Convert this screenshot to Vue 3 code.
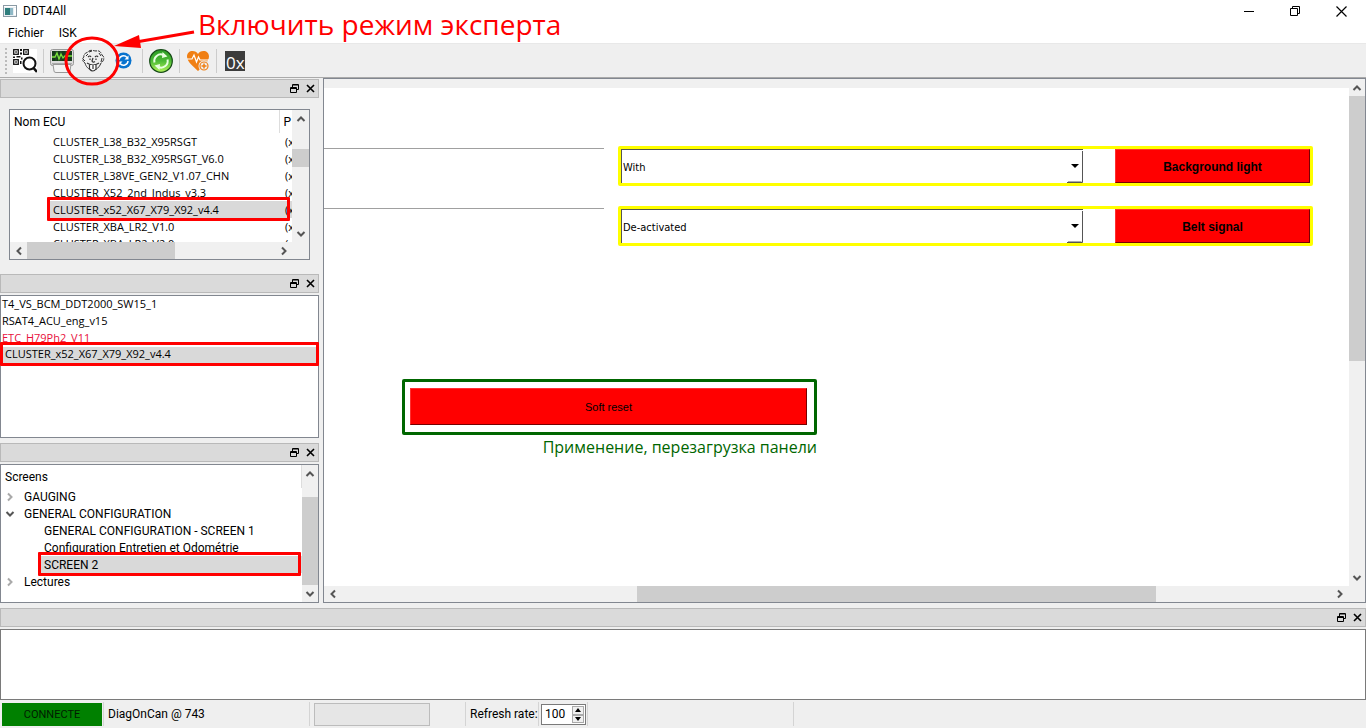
<script setup>
import { ref } from 'vue'

const ecus = [
  'CLUSTER_L38_B32_X95RSGT',
  'CLUSTER_L38_B32_X95RSGT_V6.0',
  'CLUSTER_L38VE_GEN2_V1.07_CHN',
  'CLUSTER_X52_2nd_Indus_v3.3',
  'CLUSTER_x52_X67_X79_X92_v4.4',
  'CLUSTER_XBA_LR2_V1.0',
  'CLUSTER_XBA_LR2_V2.0'
]
const selectedEcu = 'CLUSTER_x52_X67_X79_X92_v4.4'

const loaded = [
  { name: 'T4_VS_BCM_DDT2000_SW15_1' },
  { name: 'RSAT4_ACU_eng_v15' },
  { name: 'ETC_H79Ph2_V11', alert: true },
  { name: selectedEcu, selected: true }
]

const screens = [
  { name: 'GAUGING', icon: 'right' },
  { name: 'GENERAL CONFIGURATION', icon: 'down' },
  { name: 'GENERAL CONFIGURATION - SCREEN 1', child: true },
  { name: 'Configuration Entretien et Odométrie', child: true },
  { name: 'SCREEN 2', child: true, selected: true },
  { name: 'Lectures', icon: 'right' }
]

const settings = [
  { id: 'light', value: 'With', options: ['With', 'Without'], action: 'Background light' },
  { id: 'belt', value: 'De-activated', options: ['De-activated', 'Activated'], action: 'Belt signal' }
]

const rate = ref(100)
</script>

<template>
  <div class="window">
    <svg class="defs" aria-hidden="true">
      <symbol id="up" viewBox="0 0 10 10"><path d="M1.5 7 5 3.500 8.500 7" fill="none" stroke="#555" stroke-width="2" /></symbol>
      <symbol id="down" viewBox="0 0 10 10"><path d="M1.500 3 5 6.500 8.500 3" fill="none" stroke="#555" stroke-width="2" /></symbol>
      <symbol id="left" viewBox="0 0 10 10"><path d="M7 1.500 3.500 5 7 8.500" fill="none" stroke="#555" stroke-width="2" /></symbol>
      <symbol id="right" viewBox="0 0 10 10"><path d="M3 1.500 6.500 5 3 8.500" fill="none" stroke="#555" stroke-width="2" /></symbol>
      <symbol id="float" viewBox="0 0 9 9"><path d="M2.500 3.500V.500H8.500V5.500H6.500M3 1H8M.500 3.500H6.500V8.500H.500ZM1 4.500H6" fill="none" stroke="#000" /></symbol>
      <symbol id="shut" viewBox="0 0 9 9"><path d="M1 1 8 8M8 1 1 8" fill="none" stroke="#000" stroke-width="1.600" /></symbol>
    </svg>

    <header class="titlebar">
      <svg class="appicon" width="14" height="12" viewBox="0 0 14 12">
        <rect x=".5" y=".5" width="13" height="11" fill="#e8eef2" stroke="#8b9aa5" />
        <path d="M1 1.500H13" stroke="#fff" />
        <rect x="2" y="3" width="5" height="7" fill="#2d7d7c" /><rect x="7" y="3" width="3" height="7" fill="#8db7c5" />
        <rect x="11" y="3" width="2" height="7" fill="#fff" />
      </svg>
      <span class="apptitle">DDT4All</span>
      <button class="winbtn" aria-label="Minimize"><svg width="11" height="11"><path d="M0 5.500H10" stroke="#000" /></svg></button>
      <button class="winbtn" aria-label="Restore"><svg width="11" height="11"><path d="M2.500 2.500V.500H9.500V7.500H7.500M.500 2.500H7.500V9.500H.500Z" fill="none" stroke="#000" /></svg></button>
      <button class="winbtn" aria-label="Close"><svg width="11" height="11"><path d="M.5 .5 10.500 10.500M10.500 .5 .5 10.500" stroke="#000" stroke-width="1.200" /></svg></button>
    </header>

    <nav class="menubar">
      <button>Fichier</button>
      <button>ISK</button>
    </nav>

    <div class="toolbar">
      <span class="grip"></span>
      <button class="tool scan" aria-label="Scan">
        <svg width="24" height="24" viewBox="0 0 24 24">
          <rect width="24" height="24" fill="#fff" />
          <g fill="none" stroke="#111" stroke-width="1.300">
            <rect x=".7" y=".7" width="4.600" height="4.600" /><rect x="10.700" y=".7" width="4.600" height="4.600" /><rect x=".7" y="10.700" width="4.600" height="4.600" />
          </g>
          <path d="M2.300 2.300h1.500v1.500H2.300ZM12.300 2.300h1.500v1.500H12.300ZM2.300 12.300h1.500v1.500H2.300ZM7 0h2v2H7ZM7 3.500h2v2H7ZM0 7.500h2v1.500H0ZM3.500 7h4v1.500h-4ZM8 8.500h1.500v2H8ZM7 12h1.500v3H7Z" fill="#111" />
          <circle cx="16.500" cy="14.500" r="6" fill="#fff" stroke="#111" stroke-width="2" />
          <path d="M20.500 19 24 23" stroke="#111" stroke-width="2.600" />
        </svg>
      </button>
      <span class="sep"></span>
      <button class="tool" aria-label="Diagnostic">
        <svg width="24" height="24" viewBox="0 0 24 24">
          <rect x=".5" y=".5" width="23" height="16" rx="2" fill="#dcdcdc" stroke="#999" />
          <rect x="2" y="2" width="20" height="10" fill="#173a1c" />
          <path d="M2 7H22M6 2V12M11 2V12M16 2V12" stroke="#315f36" stroke-width=".6" />
          <path d="M2 8H5L7 4 9 10 11 5 13 9 15 7H22" fill="none" stroke="#79e23c" stroke-width="1.300" />
          <path d="M3 15.500 4 22Q4 23.500 6 23.500H18Q20 23.500 20 22L21 15.500Z" fill="#f3f3f3" stroke="#999" />
          <path d="M2 14.500H22" stroke="#aaa" />
        </svg>
      </button>
      <button class="tool expert" aria-label="Expert mode">
        <svg width="24" height="24" viewBox="0 0 24 24" fill="none" stroke="#333">
          <path d="M4 14C1 12 1 9 3 8 2 5 5 4 7 3 9 0 13 2 15 2 19 1 20 4 21 6 24 8 23 12 20 14" stroke-dasharray="4 1" />
          <path d="M5 7 7 5M8 3 11 2M18 4 20 7M21 9 20 13M2 10 4 12M4 14C5 18 7 19 8 20M20 14C19 17 17 19 15 20.500" />
          <path d="M7 8Q9 6 10 8M14 8Q16 6 17 8M9 9.500V11M15 9.500V11M12 9 11 12Q12 14 14 12.500M6 14Q12 18 18 14" stroke-width="1.200" />
          <path d="M8.500 16V20Q12 24 15 20V16M12 16V20" fill="#fff" stroke-width="1.200" />
        </svg>
      </button>
      <button class="tool sync" aria-label="Reconnect">
        <svg width="17" height="17" viewBox="0 0 17 17">
          <circle cx="8.500" cy="8.500" r="8" fill="#0873ce" />
          <path d="M4 8A4.500 4.500 0 0 1 12 5.500M13 9A4.500 4.500 0 0 1 5 11.500" fill="none" stroke="#fff" stroke-width="1.500" />
          <path d="M13.500 3.500V7.500H9.500ZM3.500 13.500V9.500H7.500Z" fill="#fff" />
        </svg>
      </button>
      <span class="sep"></span>
      <button class="tool" aria-label="Refresh">
        <svg width="24" height="24" viewBox="0 0 24 24">
          <defs><linearGradient id="leaf" x2="0" y2="1"><stop stop-color="#2b9c25" /><stop offset=".5" stop-color="#4cba35" /><stop offset="1" stop-color="#b5f55c" /></linearGradient></defs>
          <circle cx="12" cy="12" r="11.300" fill="url(#leaf)" stroke="#174c18" stroke-width="1.200" />
          <path d="M5.500 13.500A6.500 6.500 0 0 1 14.500 6M18.500 10.500A6.500 6.500 0 0 1 9.500 18" fill="none" stroke="#e9ffe0" stroke-width="2" />
          <path d="M13.500 3 18.500 7.500 13 9ZM10.500 21 5.500 16.500 11 15Z" fill="#e9ffe0" />
        </svg>
      </button>
      <span class="sep"></span>
      <button class="tool" aria-label="Health">
        <svg width="24" height="22" viewBox="0 0 24 22">
          <path d="M12 21C8 17 1 12 1 6.500 1 3 3.500 1 6.500 1 9 1 11 2 12 4 13 2 15 1 17.500 1 20.500 1 23 3 23 6.500 23 12 16 17 12 21Z" fill="#f07f13" />
          <path d="M1 9H6L8 5 10.500 12 12.500 7 14 10H23" fill="none" stroke="#fff" stroke-width="1.200" />
          <circle cx="18" cy="16" r="5.500" fill="#efefef" />
          <circle cx="18" cy="16" r="4" fill="none" stroke="#f07f13" stroke-width="1.200" />
          <path d="M15.500 16H20.500M18 13.500V18.500" stroke="#f07f13" stroke-width="1.500" />
        </svg>
      </button>
      <span class="sep"></span>
      <button class="tool hex">0x</button>
    </div>

    <main class="workspace">
      <aside class="side">
        <section class="dock">
          <div class="dockbar">
            <button aria-label="Float"><svg width="9" height="9"><use href="#float" /></svg></button>
            <button aria-label="Close"><svg width="9" height="9"><use href="#shut" /></svg></button>
          </div>
          <div class="inset">
            <div class="frame ecuframe">
              <div class="row grow">
                <div class="ecuview">
                  <table>
                    <thead><tr><th>Nom ECU</th><th class="proto">P</th></tr></thead>
                    <tbody>
                      <tr v-for="e in ecus" :key="e">
                        <td :class="{ picked: e === selectedEcu }"><span>{{ e }}</span></td>
                        <td class="code" :class="{ shade: e === selectedEcu }">(x</td>
                      </tr>
                    </tbody>
                  </table>
                </div>
                <div class="vbar wide">
                  <button aria-label="Up"><svg width="10" height="10"><use href="#up" /></svg></button>
                  <div class="track ecutrack"><span class="thumb"></span></div>
                  <button aria-label="Down"><svg width="10" height="10"><use href="#down" /></svg></button>
                </div>
              </div>
              <div class="hbar ecuh">
                <button aria-label="Left"><svg width="10" height="10"><use href="#left" /></svg></button>
                <div class="track"><span class="thumb"></span></div>
                <button aria-label="Right"><svg width="10" height="10"><use href="#right" /></svg></button>
              </div>
            </div>
          </div>
        </section>

        <section class="dock">
          <div class="dockbar">
            <button aria-label="Float"><svg width="9" height="9"><use href="#float" /></svg></button>
            <button aria-label="Close"><svg width="9" height="9"><use href="#shut" /></svg></button>
          </div>
          <ul class="frame loaded">
            <li v-for="l in loaded" :key="l.name" :class="{ alert: l.alert, picked: l.selected }"><span>{{ l.name }}</span></li>
          </ul>
        </section>

        <section class="dock grow">
          <div class="dockbar">
            <button aria-label="Float"><svg width="9" height="9"><use href="#float" /></svg></button>
            <button aria-label="Close"><svg width="9" height="9"><use href="#shut" /></svg></button>
          </div>
          <div class="frame row grow">
            <div class="tree">
              <div class="treehead">Screens</div>
              <ul>
                <li v-for="s in screens" :key="s.name" :class="{ child: s.child }">
                  <svg v-if="s.icon" class="twist" :class="s.icon" width="10" height="10"><use :href="'#' + s.icon" /></svg>
                  <span class="label" :class="{ picked: s.selected }"><span>{{ s.name }}</span></span>
                </li>
              </ul>
            </div>
            <div class="vbar">
              <button aria-label="Up"><svg width="10" height="10"><use href="#up" /></svg></button>
              <div class="track treetrack"><span class="thumb"></span></div>
              <button aria-label="Down"><svg width="10" height="10"><use href="#down" /></svg></button>
            </div>
          </div>
        </section>
      </aside>

      <section class="frame view">
        <div class="row grow">
          <div class="canvas">
            <div v-for="s in settings" :key="s.id" class="setting">
              <span class="rule"></span>
              <div class="group">
                <div class="combo">
                  <select :aria-label="s.action" :value="s.value">
                    <option v-for="o in s.options" :key="o">{{ o }}</option>
                  </select>
                  <svg class="caret" width="16" height="34" viewBox="0 0 16 34"><path d="M4 15H12L8 19Z" /><path d="M0 33.500H15.500V2" fill="none" stroke="#555" /><path d="M1 32.500H14.500" stroke="#aaa" /></svg>
                </div>
                <button class="red strong">{{ s.action }}</button>
              </div>
            </div>
            <div class="reset">
              <div class="resetbox"><button class="red">Soft reset</button></div>
              <p>Применение, перезагрузка панели</p>
            </div>
          </div>
          <div class="vbar">
            <button aria-label="Up"><svg width="10" height="10"><use href="#up" /></svg></button>
            <div class="track viewtrack"><span class="thumb"></span></div>
            <button aria-label="Down"><svg width="10" height="10"><use href="#down" /></svg></button>
          </div>
        </div>
        <div class="hbar viewh">
          <button aria-label="Left"><svg width="10" height="10"><use href="#left" /></svg></button>
          <div class="track"><span class="thumb"></span></div>
          <button aria-label="Right"><svg width="10" height="10"><use href="#right" /></svg></button>
        </div>
      </section>
    </main>

    <section class="logdock">
      <div class="dockbar">
        <button aria-label="Float"><svg width="9" height="9"><use href="#float" /></svg></button>
        <button aria-label="Close"><svg width="9" height="9"><use href="#shut" /></svg></button>
      </div>
      <textarea aria-label="Log"></textarea>
    </section>

    <footer class="status">
      <span class="connected">CONNECTE</span>
      <span class="cell link">DiagOnCan @ 743</span>
      <span class="cell gauge"><span class="progress"></span></span>
      <label class="cell ratelabel" for="rate">Refresh rate:</label>
      <span class="cell ratecell">
        <span class="spin">
          <input id="rate" v-model="rate" type="text">
          <span class="steps">
            <button aria-label="Increase" @click="rate++"><svg width="6" height="4"><path d="M0 4 3 0 6 4Z" /></svg></button>
            <button aria-label="Decrease" @click="rate--"><svg width="6" height="4"><path d="M0 0H6L3 4Z" /></svg></button>
          </span>
        </span>
      </span>
      <span class="cell rest"></span>
      <span class="cell"></span>
    </footer>

    <svg class="pointer" width="200" height="90" aria-hidden="true">
      <ellipse cx="92" cy="61" rx="26" ry="23" fill="none" stroke="#f00" stroke-width="3" />
      <path d="M194 32 136 42" stroke="#f00" stroke-width="3" />
      <path d="M114 46 139 35 141 48Z" fill="#f00" />
    </svg>
    <div class="note">Включить режим эксперта</div>
  </div>
</template>

<style>
body { background: #efefef; }
</style>

<style scoped>
.window {
  position: relative;
  display: flex;
  flex-direction: column;
  height: 100vh;
  overflow: hidden;
  background: #efefef;
  color: #000;
  font: 12px/17px Roboto, "Open Sans", "Noto Sans", sans-serif;
}
.window *, .window *::after { box-sizing: border-box; }
.defs { position: absolute; width: 0; height: 0; }
button { border: 0; padding: 0; background: none; color: inherit; font: inherit; display: flex; align-items: center; justify-content: center; }
svg { display: block; flex: none; }
ul { list-style: none; margin: 0; padding: 0; }
.row { display: flex; }
.grow { flex: 1; min-height: 0; }

.titlebar { display: flex; align-items: center; height: 22px; padding: 0 2px 0 3px; background: #fff; flex: none; }
.apptitle { flex: 1; margin-left: 6px; }
.winbtn { width: 46px; height: 22px; }
.menubar { display: flex; height: 22px; padding: 2px 0 0 8px; gap: 15px; background: #fff; border-bottom: 1px solid #e8e8e8; flex: none; }

.toolbar { display: flex; align-items: center; height: 34px; padding-left: 5px; border-bottom: 1px solid #aaa; flex: none; }
.grip { width: 2px; height: 26px; margin-right: 6px; background: repeating-linear-gradient(#bbb 0 2px, transparent 2px 4px); }
.expert { margin-left: 7px; }
.sync { margin: 0 4px 0 10px; }
.sep { width: 1px; height: 24px; background: #ccc; margin: 0 6px; }
.hex { width: 20px; height: 20px; margin-left: 2px; padding: 4px 0 0 1px; justify-content: flex-start; background: #3c3c3c; color: #fff; font: 17px/20px "Open Sans", sans-serif; }

.workspace { display: flex; flex: 1; min-height: 0; gap: 4px; }
.side { display: flex; flex-direction: column; flex: none; width: 319px; padding-top: 1px; }
.dock { display: flex; flex-direction: column; }
.dockbar { display: flex; justify-content: flex-end; align-items: center; gap: 7px; height: 19px; padding-right: 3px; border: 1px solid #b9b9b9; background: #dadada; flex: none; }
.frame { border: 1px solid #828790; background: #fff; }
.inset { padding: 11px 9px 14px; }
.ecuframe { display: flex; flex-direction: column; height: 151px; }
.ecuview { flex: 1; overflow: hidden; }
table { width: 100%; table-layout: fixed; border-collapse: collapse; }
th, td { padding: 0; height: 17px; text-align: left; font-weight: 400; white-space: nowrap; }
td, .loaded { font-family: "Open Sans", "Noto Sans", sans-serif; font-size: 11px; }
th { height: 23px; padding: 2px 0 0 4px; }
.proto { width: 13px; border-left: 1px solid #ddd; }
td { padding-left: 43px; }
td.code { padding-left: 6px; overflow: hidden; }
.shade { background: #d9d9d9; }

.picked { position: relative; }
.picked::after { content: ""; position: absolute; z-index: 1; border: 3px solid #f00; border-radius: 1px; }
td.picked { background: linear-gradient(90deg, transparent 40px, #d9d9d9 40px); }
td.picked::after { inset: -4px -11px -3px 37px; }

.vbar { display: flex; flex-direction: column; flex: none; width: 16px; background: #f0f0f0; }
.vbar.wide { width: 17px; }
.vbar button { width: 100%; height: 17px; flex: none; }
.hbar { display: flex; height: 17px; flex: none; background: #f0f0f0; }
.hbar button { width: 17px; height: 100%; flex: none; }
.track { display: flex; flex: 1; min-height: 0; }
.vbar .track { flex-direction: column; }
.thumb { background: #cdcdcd; }
.ecutrack { padding-top: 22px; }
.ecutrack .thumb { height: 18px; }
.ecuh { padding-right: 17px; }
.ecuh .thumb { width: 148px; }
.treetrack { padding-top: 15px; }
.treetrack .thumb { flex: 1; }
.viewtrack .thumb { height: 56%; }
.viewh { height: 16px; padding-right: 17px; }
.viewh .track { padding-left: 296px; }
.viewh .thumb { width: 75%; max-width: 519px; }

.loaded { height: 143px; margin: 2px 0 5px; }
.loaded li { height: 17px; padding-left: 1px; line-height: 16px; }
.loaded .alert { color: #e8103c; }
.loaded .picked { padding-left: 4px; line-height: 14px; background: #d9d9d9; }
.loaded .picked::after { inset: -5px -1px -2px -1px; }
.dock.grow .frame { margin-top: 2px; }
.tree { flex: 1; }
.treehead { height: 23px; padding: 4px 0 0 4px; border-right: 1px solid #ddd; }
.tree li { display: flex; align-items: center; height: 17px; padding-left: 4px; }
.tree .child { padding-left: 38px; }
.label { flex: 1; height: 17px; padding-left: 9px; line-height: 19px; }
.child .label { padding-left: 5px; }
.tree .label.picked { background: #d9d9d9; }
.label.picked::after { inset: -4px 1px -3px -1px; }
.twist.right { opacity: .5; }

.view { display: flex; flex-direction: column; flex: 1; min-width: 0; }
.canvas { flex: 1; min-width: 0; padding: 58px 36px 0 0; border-top: 9px solid #f0f0f0; }
.setting { display: flex; margin-bottom: 20px; }
.rule { width: 280px; height: 1px; margin: 2px 14px 0 0; background: #a0a0a0; }
.group { display: flex; flex: 1; height: 40px; border: 3px solid #ff0; border-radius: 2px; }
.combo { position: relative; flex: 1; height: 34px; margin-right: 32px; }
select { width: 100%; height: 34px; padding: 2px 0 0 1px; border: 0; border-top: 1px solid #555; border-left: 1px solid #555; border-radius: 0; background: #fff; color: #000; appearance: none; font: 11px "DejaVu Sans Condensed", "DejaVu Sans", sans-serif; }
.caret { position: absolute; right: 0; top: 0; pointer-events: none; }
.red { width: 195px; background: #f00; color: #000; border: 1px solid; border-color: #ff3030 #700 #700 #ff3030; font: 11px "Liberation Sans", Arial, sans-serif; }
.strong { padding-top: 2px; font-weight: 700; font-size: 12px; }
.reset { width: 415px; margin: 133px 0 0 78px; }
.resetbox { padding: 6px 7px 7px 5px; border: 3px solid #060; border-radius: 2px; }
.resetbox .red { width: 100%; height: 37px; }
.reset p { margin: 0; color: #060; font-family: "Open Sans", "Noto Sans", sans-serif; font-size: 16px; line-height: 24px; text-align: right; white-space: nowrap; }

.logdock { padding-top: 5px; flex: none; }
textarea { display: block; width: 100%; height: 71px; margin-top: 2px; border: 1px solid #7a7a7a; background: #fff; resize: none; outline: 0; }

.status { display: flex; align-items: center; height: 28px; padding-left: 2px; flex: none; }
.connected { width: 100px; height: 23px; background: #008000; color: #001c00; text-align: center; font-size: 11px; line-height: 24px; margin-right: 1px; }
.cell { display: flex; align-items: center; height: 24px; padding: 1px 0 0 4px; border-left: 1px solid #d4d4d4; }
.link { width: 206px; }
.gauge { width: 156px; }
.progress { width: 116px; height: 23px; border: 1px solid #bcbcbc; background: #e6e6e6; }
.ratelabel { width: 73px; white-space: nowrap; }
.ratecell { width: 49px; padding-left: 2px; }
.spin { display: flex; width: 45px; height: 21px; border: 1px solid #7a7a7a; background: #fff; }
input { flex: 1; min-width: 0; width: 20px; border: 0; padding: 0 0 0 3px; background: none; font: inherit; outline: 0; }
.steps { display: flex; flex-direction: column; padding: 1px; width: 14px; }
.steps button { flex: 1; border: 1px solid #aaa; background: #f0f0f0; }
.rest { width: 206px; }

.pointer { position: absolute; left: 0; top: 0; pointer-events: none; }
.note { position: absolute; left: 198px; top: 6px; color: #f00; font-family: "Open Sans", "Noto Sans", sans-serif; font-size: 28px; line-height: 36px; white-space: nowrap; }
</style>
